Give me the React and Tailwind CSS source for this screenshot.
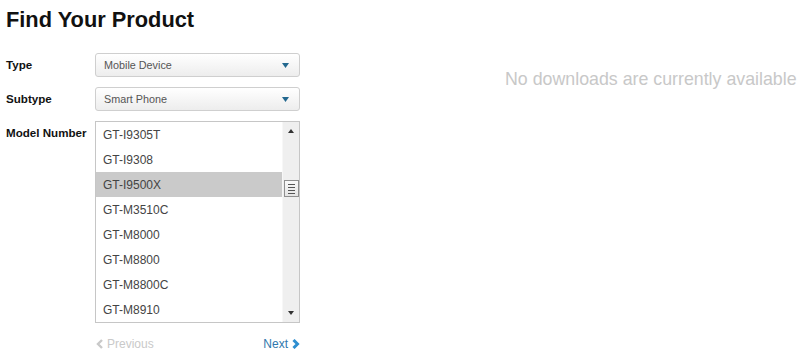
const models = ['GT-I9305T', 'GT-I9308', 'GT-I9500X', 'GT-M3510C', 'GT-M8000', 'GT-M8800', 'GT-M8800C', 'GT-M8910']

function Select({ value }) {
  return (
    <div className="flex items-center justify-between w-[205px] h-[24px] pl-[8px] pr-[10px] border border-[#cfcfcf] rounded-[3px] bg-gradient-to-b from-white to-[#ededed] text-[10.8px] text-[#555]">
      <span>{value}</span>
      <svg width="7" height="5" viewBox="0 0 7 5">
        <path d="M0 0h7L3.5 5z" fill="#23688f" />
      </svg>
    </div>
  )
}

export default function App() {
  return (
    <div className="flex w-[801px] h-[354px] bg-white font-['Liberation_Sans',Arial,sans-serif] text-[#111]">
      {/* left column */}
      <div className="w-[300px] pl-[6px] pt-[8px]">
        <h1 className="text-[21.8px] leading-[24px] font-bold">Find Your Product</h1>

        <div className="mt-[21px] flex flex-col gap-[10px]">
          <div className="flex items-center">
            <span className="w-[89px] text-[11.6px] font-bold">Type</span>
            <Select value="Mobile Device" />
          </div>
          <div className="flex items-center">
            <span className="w-[89px] text-[11.6px] font-bold">Subtype</span>
            <Select value="Smart Phone" />
          </div>
          <div className="flex">
            <span className="w-[89px] text-[11.6px] leading-[23px] font-bold">Model Number</span>
            <div className="flex w-[205px] h-[202px] border border-[#c6c6c6]">
              <ul className="flex-1">
                {models.map((m) => (
                  <li
                    key={m}
                    className={
                      'h-[25px] leading-[26px] pl-[7px] text-[12px] text-[#444] ' +
                      (m === 'GT-I9500X' ? 'bg-[#cacaca]' : '')
                    }
                  >
                    {m}
                  </li>
                ))}
              </ul>
              {/* scrollbar */}
              <div className="relative w-[17px] bg-[#efefef] border-l border-[#f7f7f7]">
                <svg className="absolute left-[5px] top-[7px]" width="6" height="4" viewBox="0 0 6 4">
                  <path d="M3 0L6 4H0z" fill="#333" />
                </svg>
                <div className="absolute left-[1px] top-[58px] w-[15px] h-[17px] border border-[#8f8f8f] bg-gradient-to-b from-[#fafafa] to-[#e4e4e4] flex flex-col items-center justify-center gap-[2px]">
                  <div className="w-[7px] h-px bg-[#555]" />
                  <div className="w-[7px] h-px bg-[#555]" />
                  <div className="w-[7px] h-px bg-[#555]" />
                  <div className="w-[7px] h-px bg-[#555]" />
                </div>
                <svg className="absolute left-[5px] bottom-[7px]" width="6" height="4" viewBox="0 0 6 4">
                  <path d="M0 0h6L3 4z" fill="#333" />
                </svg>
              </div>
            </div>
          </div>
        </div>

        <div className="ml-[89px] w-[205px] mt-[12px] flex items-center justify-between text-[12px]">
          <span className="flex items-center gap-[4px] pl-[1px] text-[#c9c9c9]">
            <svg width="7" height="10" viewBox="0 0 7 10">
              <path d="M6 1L2 5l4 4" fill="none" stroke="#c9c9c9" strokeWidth="2.4" />
            </svg>
            Previous
          </span>
          <span className="flex items-center gap-[4px] text-[#2f78ad]">
            Next
            <svg width="8" height="10" viewBox="0 0 8 10">
              <path d="M1.5 1l4 4-4 4" fill="none" stroke="#2f8fd0" strokeWidth="3" />
            </svg>
          </span>
        </div>
      </div>

      {/* right column */}
      <div className="flex-1 pl-[205px] pt-[68px]">
        <p className="text-[17.8px] leading-[22px] text-[#c8c8c8] whitespace-nowrap">
          No downloads are currently available
        </p>
      </div>
    </div>
  )
}
